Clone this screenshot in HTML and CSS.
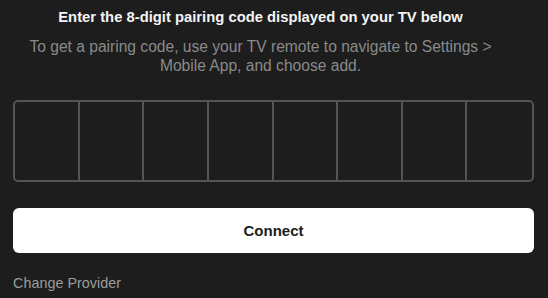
FILE: index.html
```html
<!DOCTYPE html>
<html lang="en">
<head>
<meta charset="utf-8">
<title>Pairing code</title>
<link rel="stylesheet" href="styles.css">
</head>
<body>
<main class="pair">
  <h1 class="pair-title">Enter the 8-digit pairing code displayed on your TV below</h1>
  <p class="pair-hint">To get a pairing code, use your TV remote to navigate to Settings &gt; Mobile App, and choose add.</p>
  <div class="code-grid">
    <input class="code-cell" maxlength="1" aria-label="Digit 1">
    <input class="code-cell" maxlength="1" aria-label="Digit 2">
    <input class="code-cell" maxlength="1" aria-label="Digit 3">
    <input class="code-cell" maxlength="1" aria-label="Digit 4">
    <input class="code-cell" maxlength="1" aria-label="Digit 5">
    <input class="code-cell" maxlength="1" aria-label="Digit 6">
    <input class="code-cell" maxlength="1" aria-label="Digit 7">
    <input class="code-cell" maxlength="1" aria-label="Digit 8">
  </div>
  <button class="connect-btn" type="button">Connect</button>
  <a class="change-link" href="#">Change Provider</a>
</main>
</body>
</html>
```

FILE: styles.css
```css
html, body {
  margin: 0;
  padding: 0;
  background: #1d1d1d;
}

body {
  font-family: "Liberation Sans", Arial, sans-serif;
  width: 548px;
  height: 298px;
  overflow: hidden;
}

.pair {
  display: flex;
  flex-direction: column;
  padding: 8px 14px 0 13px;
}

.pair-title {
  margin: 0 26px 0 0;
  font-size: 14.8px;
  line-height: 18px;
  font-weight: bold;
  color: #f4f4f4;
  text-align: center;
}

.pair-hint {
  margin: 11px 26px 0 0;
  font-size: 15.6px;
  line-height: 19px;
  font-weight: normal;
  color: #8a8a8a;
  text-align: center;
}

.code-grid {
  margin-top: 25px;
  display: grid;
  grid-template-columns: repeat(8, 1fr);
  height: 82px;
  box-sizing: border-box;
  border: 2px solid #545454;
  border-radius: 5px;
  overflow: hidden;
}

.code-cell {
  margin: 0;
  padding: 0;
  min-width: 0;
  border: none;
  border-right: 2px solid #545454;
  background: transparent;
  color: #ffffff;
  font-family: inherit;
  font-size: 28px;
  text-align: center;
  outline: none;
}

.code-cell:last-child {
  border-right: none;
}

.connect-btn {
  margin-top: 26px;
  height: 45px;
  border: none;
  border-radius: 6px;
  background: #ffffff;
  color: #1d1d1d;
  font-family: inherit;
  font-size: 15px;
  font-weight: bold;
  cursor: pointer;
}

.change-link {
  margin-top: 21px;
  align-self: flex-start;
  font-size: 14.4px;
  line-height: 18px;
  color: #9c9c9c;
  text-decoration: none;
}
```
